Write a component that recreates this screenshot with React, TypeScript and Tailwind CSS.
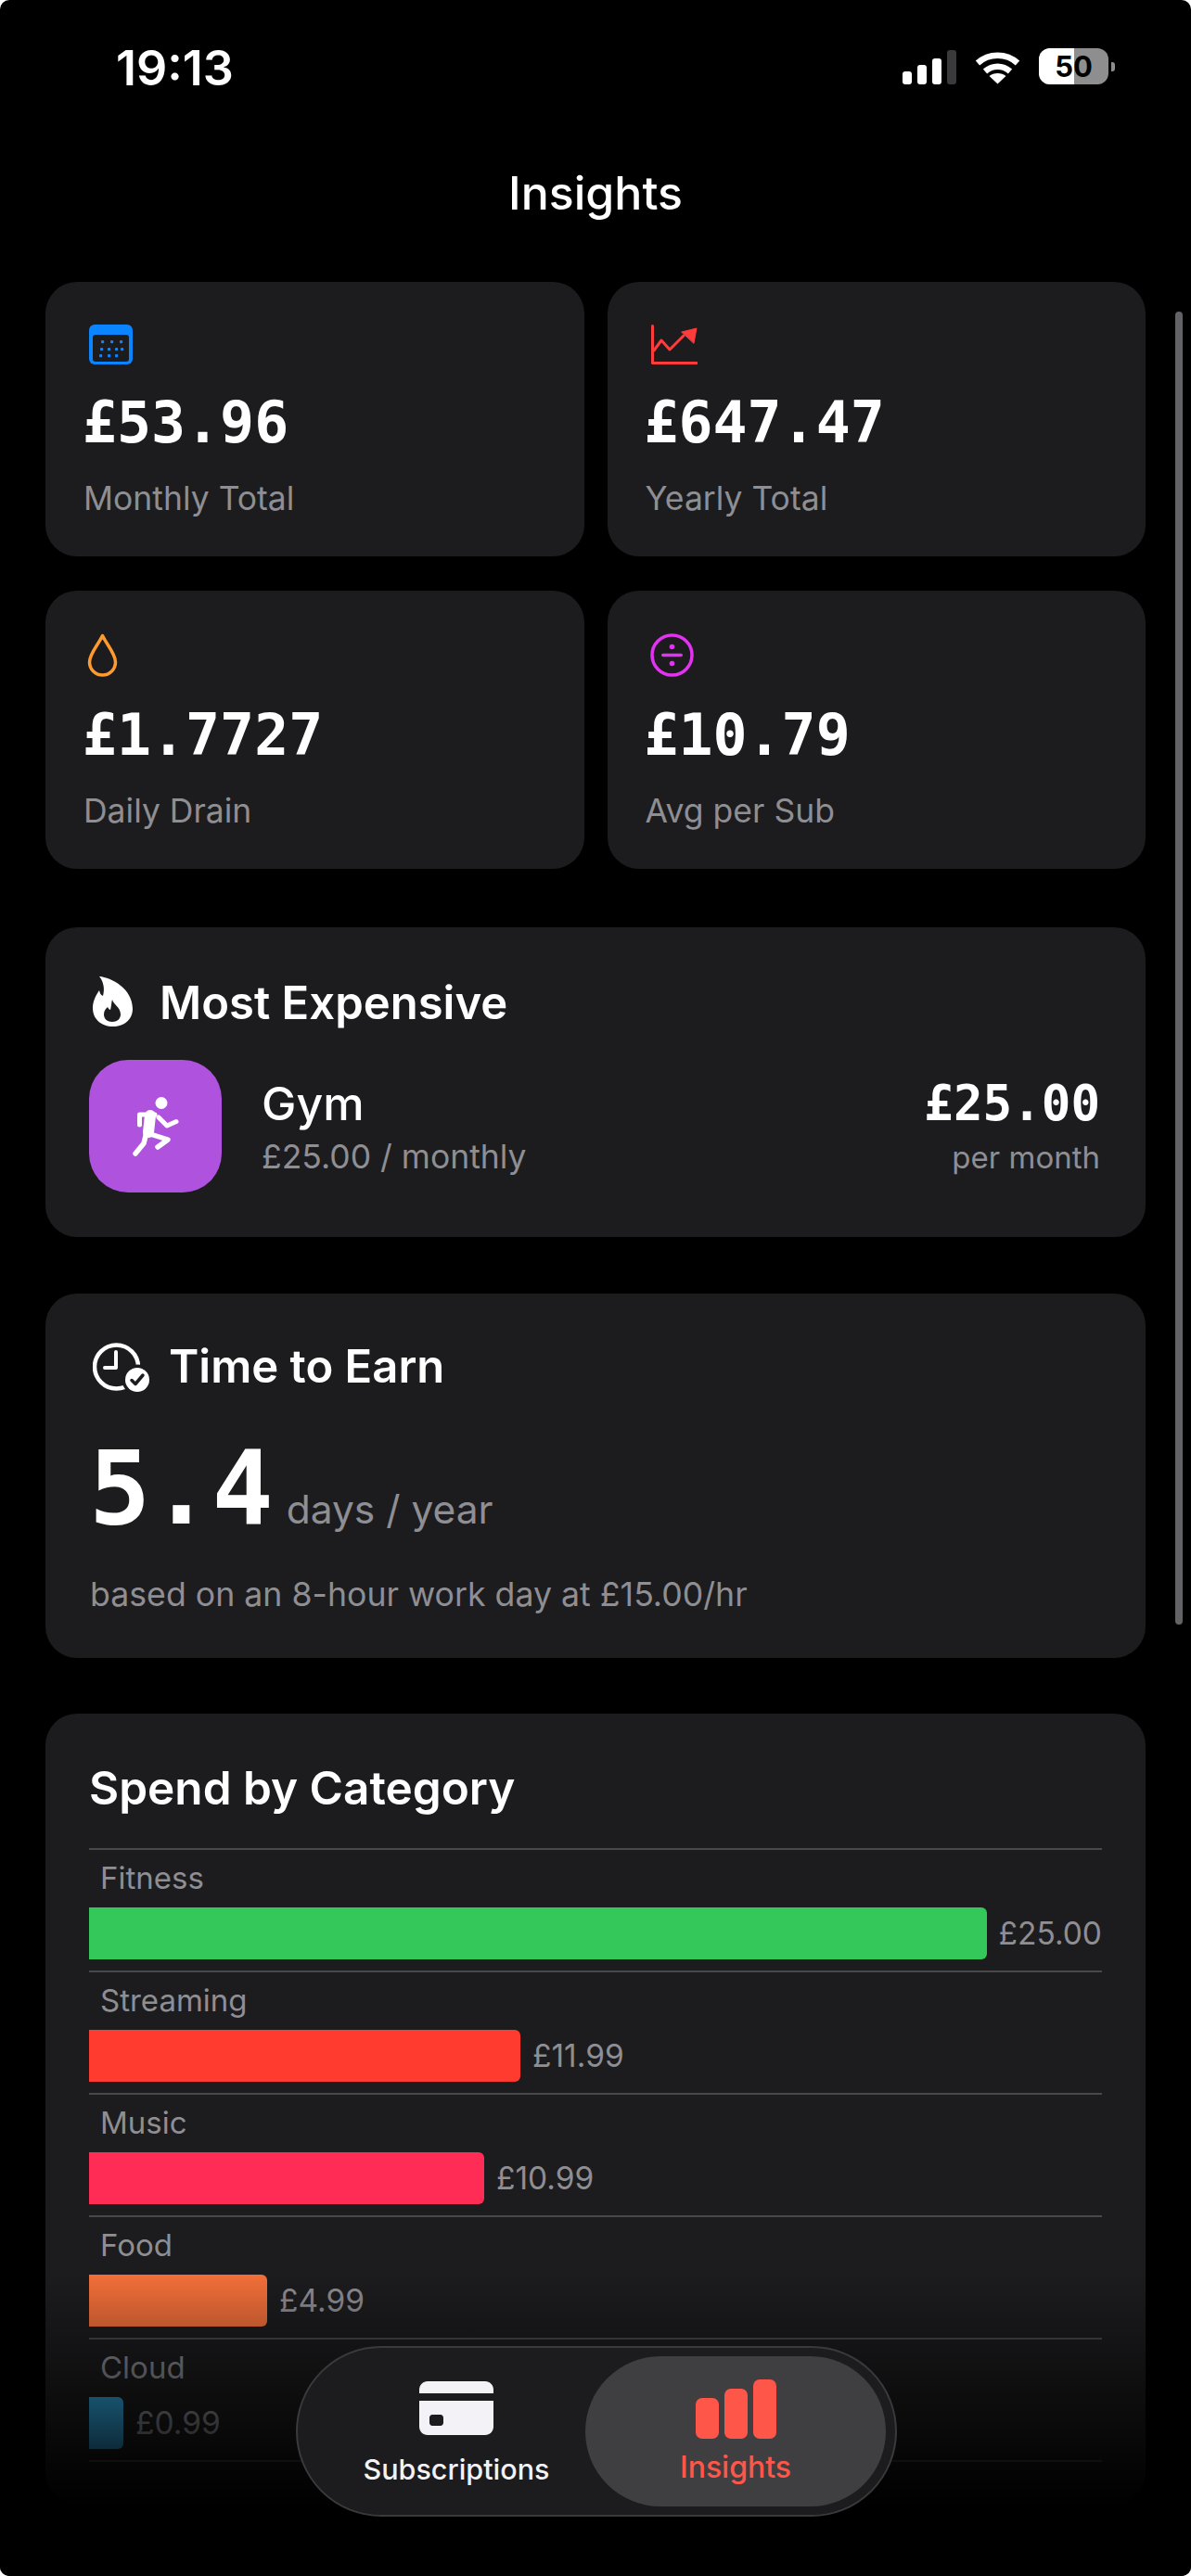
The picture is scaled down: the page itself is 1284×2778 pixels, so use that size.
import React from 'react';

const mono = "font-['DejaVu_Sans_Mono',monospace] font-bold";

const categories = [
  { name: 'Fitness', value: '£25.00', width: 969, color: 'bg-[#34c759]' },
  { name: 'Streaming', value: '£11.99', width: 465, color: 'bg-[#ff3b30]' },
  { name: 'Music', value: '£10.99', width: 426, color: 'bg-[#ff2d55]' },
  { name: 'Food', value: '£4.99', width: 192, color: 'bg-[#f5703a]' },
  { name: 'Cloud', value: '£0.99', width: 37, color: 'bg-[#32ade6]' },
];

function CalendarIcon() {
  const dots = [
    [13, 17], [23, 17], [33, 17],
    [12, 25], [20, 25], [28, 25], [34, 25],
    [11, 32], [20, 32], [28, 32],
  ];
  return (
    <svg width="47" height="43" viewBox="0 0 47 43">
      <rect width="47" height="43" rx="6" fill="#0a84ff" />
      <rect x="4" y="11" width="39" height="29" rx="3" fill="#1c1c1e" />
      {dots.map(([x, y]) => (
        <rect key={`${x}-${y}`} x={x} y={y} width="3.2" height="3.2" rx="1" fill="#0a84ff" />
      ))}
    </svg>
  );
}

function ChartIcon() {
  return (
    <svg width="50" height="43" viewBox="0 0 50 43" fill="none" stroke="#ff3b3b" strokeWidth="3" strokeLinecap="round" strokeLinejoin="round">
      <path d="M1.5 1.5V41.5H49" />
      <path d="M3 28L11 17L20 27L35 12" />
      <path d="M33 8L49 4L46 20Z" fill="#ff3b3b" strokeWidth="1" />
    </svg>
  );
}

function DropIcon() {
  return (
    <svg width="33" height="47" viewBox="0 0 33 47" fill="none" stroke="#ff9a2e" strokeWidth="3.5" strokeLinejoin="round">
      <path d="M16.5 2.5C12 12 2.5 22 2.5 31C2.5 39 9 45 16.5 45C24 45 30.5 39 30.5 31C30.500 22 21 12 16.5 2.5Z" />
    </svg>
  );
}

function DivideIcon() {
  return (
    <svg width="47" height="47" viewBox="0 0 47 47" fill="none">
      <circle cx="23.5" cy="23.5" r="21.5" stroke="#e234f0" strokeWidth="3.5" />
      <rect x="12" y="21.7" width="23" height="3.6" rx="1.8" fill="#e234f0" />
      <circle cx="23.5" cy="14.5" r="2.8" fill="#e234f0" />
      <circle cx="23.5" cy="32.5" r="2.8" fill="#e234f0" />
    </svg>
  );
}

function FlameIcon() {
  return (
    <svg width="43" height="54" viewBox="0 0 43 54">
      <path
        fill="#fff"
        fillRule="evenodd"
        d="M7 0C20 1 43 13 43 35C43 47 33 54 22 54C9 54 0 46 0 34C0 27 3 21 7 15C8 19 9 20 11 21C13 14 12 6 7 0ZM21 25C22 30 30 33 30 41C30 46 26 49 21 49C16 49 12 46 12 41C12 37 14 35 16 33C17 35 18 36 19 36C20 33 20 28 21 25Z"
      />
    </svg>
  );
}

function RunnerIcon() {
  return (
    <svg width="50" height="64" viewBox="0 0 50 64" fill="none" stroke="#fff" strokeLinecap="round" strokeLinejoin="round">
      <circle cx="31" cy="6.5" r="6.5" fill="#fff" stroke="none" />
      <path d="M7.5 30V19H24" strokeWidth="5" />
      <path d="M19 20L17 38" strokeWidth="12" />
      <path d="M28 22L37 31L47 26.5" strokeWidth="5" />
      <path d="M19 40L38 46L27 54" strokeWidth="5.5" />
      <path d="M15 38L12 50L3 61" strokeWidth="5.5" />
    </svg>
  );
}

function ClockIcon() {
  return (
    <svg width="62" height="53" viewBox="0 0 62 53" fill="none">
      <circle cx="25.500" cy="26" r="23.500" stroke="#fff" strokeWidth="4.5" />
      <path d="M25 10V27H13" stroke="#fff" strokeWidth="4" strokeLinecap="round" strokeLinejoin="round" />
      <circle cx="48" cy="40" r="16.500" fill="#1c1c1e" />
      <circle cx="48" cy="40" r="13" fill="#fff" />
      <path d="M42 40.500L46 44.500L54 35" stroke="#1c1c1e" strokeWidth="3.5" strokeLinecap="round" strokeLinejoin="round" />
    </svg>
  );
}

function WifiIcon() {
  return (
    <svg width="49" height="37" viewBox="0 0 49 37" fill="none" stroke="#fff" strokeWidth="6.5">
      <path d="M3 14C15 3 34 3 46 14" />
      <path d="M11 23C19 16 30 16 38 23" />
      <path d="M24.5 36.5L15.5 28C20 24 29 24 33.5 28Z" fill="#fff" stroke="none" />
    </svg>
  );
}

function StatCard({ icon, value, label, iconClass }: { icon: React.ReactNode; value: string; label: string; iconClass: string }) {
  return (
    <div className="rounded-[34px] bg-[#1c1c1e] px-[40px] pt-[46px]">
      <div className={`flex items-start ${iconClass}`}>{icon}</div>
      <div className={`mt-[28px] text-[61.500px] leading-[70px] text-white ${mono}`}>{value}</div>
      <div className="mt-[25px] pl-[1px] text-[35.500px] leading-[44px] text-[#8e8e93]">{label}</div>
    </div>
  );
}

function CategoryRow({ name, value, width, color }: { name: string; value: string; width: number; color: string }) {
  return (
    <div className="h-[132px] border-t-2 border-[#48484a]">
      <div className="flex h-[62px] items-center pl-[12px] text-[33px] text-[#8e8e93]">{name}</div>
      <div className="flex items-center gap-[13px]">
        <div className={`h-[56px] rounded-r-[6px] ${color}`} style={{ width }} />
        <span className="text-[33.500px] text-[#8e8e93]">{value}</span>
      </div>
    </div>
  );
}

function TabBar() {
  return (
    <div className="absolute top-[2530px] left-[319px] flex h-[184px] w-[648px] items-center rounded-[92px] border-2 border-[#3a3a3c] bg-[#1c1c1e] pr-[10px]">
      <div className="flex w-[310px] flex-col items-center pt-[7px] pl-[32px]">
        <svg width="80" height="58" viewBox="0 0 80 58">
          <path d="M0 13V9C0 4 4 0 9 0H71C76 0 80 4 80 9V13Z" fill="#f2f2f7" />
          <path fillRule="evenodd" fill="#f2f2f7" d="M0 21H80V49C80 54 76 58 71 58H9C4 58 0 54 0 49ZM14 36C12.500 36 11 37.500 11 39V45C11 46.500 12.500 48 14 48H23C24.500 48 26 46.500 26 45V39C26 37.500 24.500 36 23 36Z" />
        </svg>
        <span className="mt-[17px] text-[30.500px] leading-[40px] font-medium text-[#f2f2f7]">Subscriptions</span>
      </div>
      <div className="flex h-[162px] flex-1 flex-col items-center justify-center rounded-[81px] bg-[#3f3f41] pt-[3px]">
        <svg width="87" height="64" viewBox="0 0 87 64" fill="#ff564a">
          <rect x="0" y="20" width="25" height="44" rx="7" />
          <rect x="31" y="10" width="25" height="54" rx="7" />
          <rect x="62" y="0" width="25" height="64" rx="7" />
        </svg>
        <span className="mt-[11px] text-[32px] leading-[40px] font-medium text-[#ff564a]">Insights</span>
      </div>
    </div>
  );
}

export default function App() {
  return (
    <div className="h-[2778px] w-[1284px] bg-white">
      <div className="relative h-full w-full overflow-hidden rounded-[10px] bg-black font-[Inter,sans-serif]">
        {/* Status bar */}
        <div className="relative flex h-[144px] items-start justify-between pt-[46px] pr-[82px] pl-[125px]">
          <span className="text-[52px] leading-[56px] font-semibold text-white">19:13</span>
          <div className="mt-[6px] flex items-end">
            <div className="flex items-end gap-[6px]">
              <div className="h-[14px] w-[10px] rounded-[3px] bg-white" />
              <div className="h-[21px] w-[10px] rounded-[3px] bg-white" />
              <div className="h-[28px] w-[10px] rounded-[3px] bg-white" />
              <div className="h-[37px] w-[10px] rounded-[3px] bg-[#3a3a3c]" />
            </div>
            <div className="ml-[20px]"><WifiIcon /></div>
            <div className="relative ml-[20px] flex h-[39px] w-[75px] items-center justify-center overflow-hidden rounded-[12px] bg-[#8e8e8e]">
              <div className="absolute inset-y-0 left-0 w-[38px] bg-white" />
              <span className="relative text-[31px] leading-none font-bold text-black">50</span>
            </div>
            <div className="mb-[14px] ml-[3px] h-[10px] w-[4px] rounded-r-[3px] bg-[#8e8e8e]" />
          </div>
        </div>

        {/* Header */}
        <div className="flex h-[160px] items-start justify-center pt-[34px]">
          <h1 className="text-[50px] leading-[60px] font-medium text-white">Insights</h1>
        </div>

        <div className="flex flex-col px-[49px]">
          <div className="grid grid-cols-2 grid-rows-[296px_300px] gap-x-[25px] gap-y-[37px]">
            <StatCard icon={<CalendarIcon />} iconClass="ml-[7px]" value="£53.96" label="Monthly Total" />
            <StatCard icon={<ChartIcon />} iconClass="ml-[7px]" value="£647.47" label="Yearly Total" />
            <StatCard icon={<DropIcon />} iconClass="ml-[5px]" value="£1.7727" label="Daily Drain" />
            <StatCard icon={<DivideIcon />} iconClass="ml-[6px]" value="£10.79" label="Avg per Sub" />
          </div>

          {/* Most expensive */}
          <section className="mt-[63px] h-[334px] rounded-[34px] bg-[#1c1c1e] pt-[53px] pr-[49px] pl-[47px]">
            <div className="flex items-center gap-[29px] pl-[4px]">
              <FlameIcon />
              <h2 className="translate-y-[2px] text-[49px] leading-[54px] font-semibold text-white">Most Expensive</h2>
            </div>
            <div className="mt-[36px] flex items-center">
              <div className="flex h-[143px] w-[143px] items-center justify-center rounded-[42px] bg-[#af52de]">
                <RunnerIcon />
              </div>
              <div className="ml-[43px] flex-1">
                <div className="mt-[3px] text-[50px] leading-[56px] font-medium text-white">Gym</div>
                <div className="mt-[8px] text-[35.500px] leading-[44px] text-[#8e8e93]">£25.00 / monthly</div>
              </div>
              <div className="text-right">
                <div className={`mt-[3px] text-[52.500px] leading-[56px] text-white ${mono}`}>£25.00</div>
                <div className="mt-[8px] text-[33px] leading-[44px] text-[#8e8e93]">per month</div>
              </div>
            </div>
          </section>

          {/* Time to earn */}
          <section className="mt-[61px] h-[393px] rounded-[34px] bg-[#1c1c1e] pt-[52px] pl-[48px]">
            <div className="flex items-center gap-[20px] pl-[3px]">
              <ClockIcon />
              <h2 className="text-[49px] leading-[54px] font-semibold text-white">Time to Earn</h2>
            </div>
            <div className="mt-[44px] flex items-baseline gap-[14px]">
              <span className={`-ml-[1px] text-[110px] leading-[120px] text-white ${mono}`}>5.4</span>
              <span className="text-[42.500px] leading-[54px] text-[#8e8e93]">days / year</span>
            </div>
            <div className="mt-[32px] text-[35.700px] leading-[44px] text-[#8e8e93]">based on an 8-hour work day at £15.00/hr</div>
          </section>

          {/* Spend by category */}
          <section className="mt-[60px] h-[852px] rounded-[34px] bg-[#1c1c1e] px-[47px] pt-[52px]">
            <h2 className="mb-[37px] text-[49.500px] leading-[56px] font-semibold text-white">Spend by Category</h2>
            {categories.map(c => (
              <CategoryRow key={c.name} {...c} />
            ))}
            <div className="border-t-2 border-[#48484a]" />
          </section>
        </div>

        {/* Scroll indicator */}
        <div className="absolute top-[336px] left-[1267px] h-[1416px] w-[8px] rounded-full bg-[#636366]" />

        {/* Fade under the tab bar */}
        <div className="absolute inset-x-0 top-[2450px] h-[255px] bg-gradient-to-b from-transparent to-black" />
        <div className="absolute inset-x-0 top-[2705px] bottom-0 bg-black" />

        <TabBar />
      </div>
    </div>
  );
}
